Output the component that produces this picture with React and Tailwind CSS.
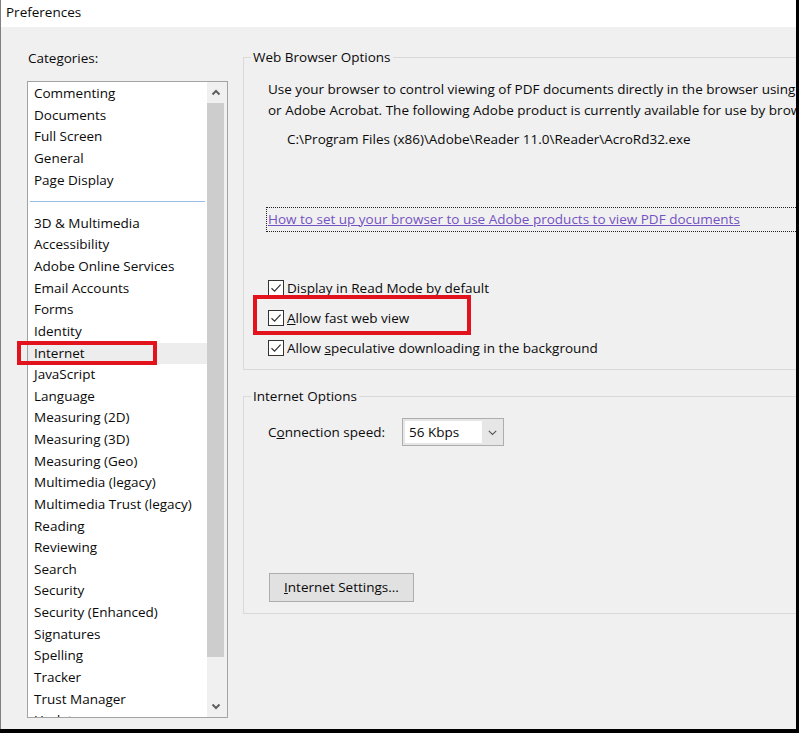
const CATS_TOP = ['Commenting', 'Documents', 'Full Screen', 'General', 'Page Display'];
const CATS = [
  '3D & Multimedia', 'Accessibility', 'Adobe Online Services', 'Email Accounts', 'Forms', 'Identity',
  'Internet', 'JavaScript', 'Language', 'Measuring (2D)', 'Measuring (3D)', 'Measuring (Geo)',
  'Multimedia (legacy)', 'Multimedia Trust (legacy)', 'Reading', 'Reviewing', 'Search', 'Security',
  'Security (Enhanced)', 'Signatures', 'Spelling', 'Tracker', 'Trust Manager', 'Updater',
];

function Chevron({ up }) {
  return (
    <svg width="10" height="7" viewBox="0 0 10 7">
      <path d={up ? 'M1.5 5.5 L5 2 L8.5 5.5' : 'M1.5 1.5 L5 5 L8.5 1.5'} fill="none" stroke="#606060" strokeWidth="2" />
    </svg>
  );
}

function Checkbox() {
  return (
    <svg width="16" height="16" viewBox="0 0 16 16" className="shrink-0">
      <rect x="0.5" y="0.5" width="15" height="15" fill="#fff" stroke="#333" />
      <path d="M3.5 8.2 L6.6 11.2 L12.6 4.6" fill="none" stroke="#333" strokeWidth="1.2" />
    </svg>
  );
}

function Item({ label, selected }) {
  return (
    <div className={`relative h-[21.64px] leading-[21.64px] pl-[6px] whitespace-nowrap ${selected ? 'bg-[#ededed]' : ''}`}>
      {label}
      {selected && (
        <div className="absolute left-[-11px] top-[-2px] w-[140px] h-[24px] border-[4px] border-[#e3131e]" />
      )}
    </div>
  );
}

function CheckRow({ children, boxed }) {
  return (
    <div className="relative h-[30px] flex items-center gap-[3px]">
      <Checkbox />
      <span>{children}</span>
      {boxed && (
        <div className="absolute left-[-15px] top-[-8px] w-[218px] h-[40px] border-[4px] border-[#e3131e]" />
      )}
    </div>
  );
}

export default function App() {
  return (
    <div className="w-[799px] h-[733px] bg-black overflow-hidden font-['Open_Sans',sans-serif] text-[13.5px] text-[#0a0a0a]">
      <div className="w-[796px] h-[729px] bg-[#f0f0f0] border-l border-[#808080] flex flex-col overflow-hidden">
        <div className="h-[27px] shrink-0 bg-white pl-[5px] pt-[2px] leading-[20px]">Preferences</div>

        <div className="flex flex-1 min-h-0">
          {/* categories */}
          <div className="w-[242px] shrink-0 pl-[26px] pt-[21px]">
            <div className="h-[20px] leading-[20px] pl-[1px]">Categories:</div>
            <div className="mt-[13px] w-[201px] h-[637px] border border-[#a3a3a3] bg-white flex">
              <div className="flex-1 pt-[1px] overflow-x-visible overflow-y-clip">
                {CATS_TOP.map(c => <Item key={c} label={c} />)}
                <div className="h-[21.64px] flex items-center pl-[2px] pr-[2px]">
                  <div className="h-px w-full bg-[#99bde3]" />
                </div>
                {CATS.map(c => <Item key={c} label={c} selected={c === 'Internet'} />)}
              </div>
              <div className="w-[20px] shrink-0 bg-[#f0f0f0] flex flex-col">
                <div className="h-[21px] flex items-center justify-center pr-[3px]"><Chevron up /></div>
                <div className="w-[17px] h-[554px] bg-[#cdcdcd]" />
                <div className="flex-1" />
                <div className="h-[22px] flex items-center justify-center pr-[3px]"><Chevron /></div>
              </div>
            </div>
          </div>

          {/* options */}
          <div className="flex-1 min-w-0 overflow-hidden pt-[20px]">
            <fieldset className="w-[580px] border border-[#d9d9d9] p-0 m-0">
              <legend className="ml-[7px] px-[2px] leading-[20px]">Web Browser Options</legend>
              <div className="pl-[24px] pt-[12px] pb-[6px]">
                <p className="leading-[21px] whitespace-nowrap">
                  Use your browser to control viewing of PDF documents directly in the browser using Adobe Reader
                  <br />
                  or Adobe Acrobat. The following Adobe product is currently available for use by browsers:
                </p>
                <div className="mt-[8px] pl-[19px] leading-[21px]">C:\Program Files (x86)\Adobe\Reader 11.0\Reader\AcroRd32.exe</div>
                <div className="mt-[57px] ml-[-2px] w-[580px] h-[25px] border border-dotted border-[#222] pl-[1px] leading-[23px]">
                  <span className="text-[#7452c2] underline">How to set up your browser to use Adobe products to view PDF documents</span>
                </div>
                <div className="mt-[41px]">
                  <CheckRow>Display in Read Mode by default</CheckRow>
                  <CheckRow boxed><u>A</u>llow fast web view</CheckRow>
                  <CheckRow>Allow <u>s</u>peculative downloading in the background</CheckRow>
                </div>
              </div>
            </fieldset>

            <fieldset className="mt-[16px] w-[580px] border border-[#d9d9d9] p-0 m-0">
              <legend className="ml-[7px] px-[2px] leading-[20px]">Internet Options</legend>
              <div className="pl-[24px] pt-[12px] pb-[11px]">
                <div className="flex items-center h-[28px]">
                  <span className="w-[134px] shrink-0">C<u>o</u>nnection speed:</span>
                  <div className="w-[102px] h-[28px] border border-[#adadad] bg-[#e6e6e6] flex">
                    <div className="w-[77px] bg-white m-[2px] mr-0 pl-[4px] leading-[22px]">56 Kbps</div>
                    <div className="flex-1 flex items-center justify-center pt-[1px]">
                      <svg width="9" height="6" viewBox="0 0 9 6">
                        <path d="M0.8 0.8 L4.5 4.5 L8.2 0.8" fill="none" stroke="#555" strokeWidth="1.1" />
                      </svg>
                    </div>
                  </div>
                </div>
                <button className="mt-[127px] ml-[1px] w-[145px] h-[29px] bg-[#e1e1e1] border border-[#adadad] leading-[27px]">
                  <u>I</u>nternet Settings...
                </button>
              </div>
            </fieldset>
          </div>
        </div>
      </div>
    </div>
  );
}
